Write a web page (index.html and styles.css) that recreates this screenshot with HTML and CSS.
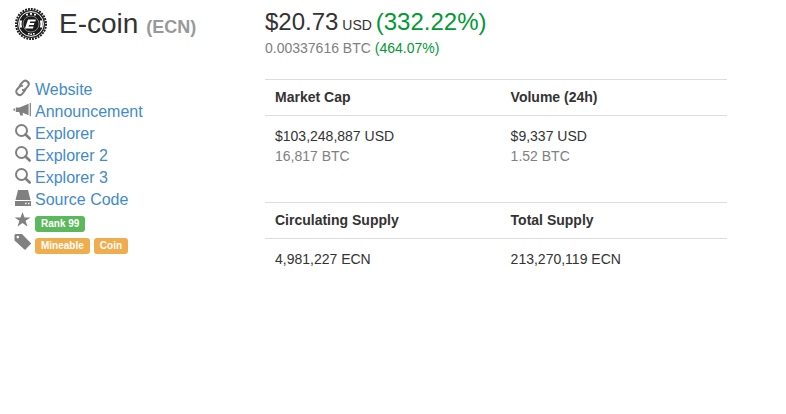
FILE: index.html
```
<!DOCTYPE html>
<html lang="en">
<head>
  <meta charset="utf-8">
  <title>E-coin (ECN) price, market cap and info</title>
  <link rel="stylesheet" href="styles.css">
</head>
<body>
  <div class="container">
    <div class="sidebar">
      <h1 class="coin-name">
        <svg class="coin-logo" viewBox="0 0 32 32" aria-hidden="true">
          <circle cx="16" cy="16" r="14" fill="#1b1b1b"/>
          <circle cx="16" cy="16" r="15" fill="none" stroke="#1b1b1b" stroke-width="2" stroke-dasharray="1.9 1.02"/>
          <circle cx="16" cy="16" r="12.4" fill="none" stroke="#fff" stroke-width="1"/>
          <circle cx="16" cy="16" r="8" fill="none" stroke="#999" stroke-width=".8"/>
          <path d="M4.500 12.500h2.600l-.6 3.500.6 3.500H4.500zM27.500 12.500h-2.600l.6 3.500-.6 3.500h2.600z" fill="#fff"/>
          <path d="M11 5.800h2v1.600h-2zM15 4.800h2v2h-2zM19 5.800h2v1.600h-2zM13 25h1.600v1.400H13zM15.400 25.400H17V27h-1.600zM18 25h1.600v1.400H18z" fill="#fff"/>
          <path d="M13 11.500h8l-.7 2h-5l-.5 1.500h4.600l-.6 2h-4.700l-.5 1.600h5l-.7 2h-8z" fill="#fff"/>
        </svg>
        <span>E-coin <small>(ECN)</small></span>
      </h1>

      <ul class="links">
        <li>
          <svg class="icon" viewBox="0 0 16 16" aria-hidden="true"><g fill="none" stroke="#808080" stroke-width="2"><path d="M4.800 7.200c-.3-1 0-1.900.7-2.700l2.300-2.600C9 .5 11 .4 12.500 1.600s1.700 3.100.5 4.600l-2.300 2.700c-.9 1-2.300 1.300-3.600.8"/><path d="M10.200 8.300c.3 1 0 2-.7 2.800l-2.300 2.700c-1.200 1.400-3.200 1.500-4.700.3s-1.700-3.100-.5-4.600l2.300-2.700c.9-1 2.300-1.300 3.600-.8"/></g></svg>
          <a href="#">Website</a>
        </li>
        <li>
          <svg class="icon" viewBox="0 0 16 16" aria-hidden="true"><path d="M14.700 1h1.200v13.300h-1.200zM13.600 1.800v11.500L7.500 10.800l.7 2.700H5.300L4.200 10H.8V5.600h3.600zM-1.500 6.600H0v2.200h-1.500z"/></svg>
          <a href="#">Announcement</a>
        </li>
        <li>
          <svg class="icon" viewBox="0 0 16 16" aria-hidden="true"><circle cx="6.500" cy="6.500" r="5.500" fill="none" stroke="#808080" stroke-width="2"/><path d="M10.500 10.500l4.200 4" stroke="#808080" stroke-width="2.600" stroke-linecap="round"/></svg>
          <a href="#">Explorer</a>
        </li>
        <li>
          <svg class="icon" viewBox="0 0 16 16" aria-hidden="true"><circle cx="6.500" cy="6.500" r="5.500" fill="none" stroke="#808080" stroke-width="2"/><path d="M10.500 10.500l4.200 4" stroke="#808080" stroke-width="2.600" stroke-linecap="round"/></svg>
          <a href="#">Explorer 2</a>
        </li>
        <li>
          <svg class="icon" viewBox="0 0 16 16" aria-hidden="true"><circle cx="6.500" cy="6.500" r="5.500" fill="none" stroke="#808080" stroke-width="2"/><path d="M10.500 10.500l4.200 4" stroke="#808080" stroke-width="2.600" stroke-linecap="round"/></svg>
          <a href="#">Explorer 3</a>
        </li>
        <li>
          <svg class="icon" viewBox="0 0 16 16" aria-hidden="true"><path d="M3 0h10l2.500 10H.5zM0 11h16v5H0z"/><path d="M10 12.800h1.500v1.500H10zM13 12.800h1.500v1.500H13z" fill="#fff"/></svg>
          <a href="#">Source Code</a>
        </li>
        <li>
          <svg class="icon" viewBox="0 0 16 16" aria-hidden="true"><path d="M7.500 0l2 5.400h6l-4.900 3.400L12.500 14.600l-5-3.600-5 3.600 1.900-5.800L-.5 5.400h6z"/></svg>
          <span class="label label-success">Rank 99</span>
        </li>
        <li>
          <svg class="icon" viewBox="0 0 16 16" aria-hidden="true"><path fill-rule="evenodd" d="M-.5 1L.5 0H7l9.200 9.500L10 16-.5 6.500zM2.800 1.800a1.300 1.300 0 1 0 0 2.600 1.300 1.300 0 0 0 0-2.600z"/></svg>
          <span class="label label-warning">Mineable</span>
          <span class="label label-warning">Coin</span>
        </li>
      </ul>
    </div>

    <div class="main">
      <div class="price">
        <span class="price-usd">$20.73</span> USD
        <span class="price-usd positive">(332.22%)</span>
      </div>
      <div class="price-btc">0.00337616 BTC <span class="positive">(464.07%)</span></div>

      <table class="stats">
        <tr>
          <th>Market Cap</th>
          <th>Volume (24h)</th>
        </tr>
        <tr>
          <td>$103,248,887 USD<br><span class="muted">16,817 BTC</span></td>
          <td>$9,337 USD<br><span class="muted">1.52 BTC</span></td>
        </tr>
      </table>

      <table class="stats">
        <tr>
          <th>Circulating Supply</th>
          <th>Total Supply</th>
        </tr>
        <tr>
          <td>4,981,227 ECN</td>
          <td>213,270,119 ECN</td>
        </tr>
      </table>
    </div>
  </div>
</body>
</html>
```
FILE: styles.css
```
* {
  box-sizing: border-box;
}

body {
  margin: 0;
  font-family: Arial, "Liberation Sans", sans-serif;
  font-size: 14px;
  line-height: 20px;
  color: #333;
  background-color: #fff;
}

.container {
  display: grid;
  grid-template-columns: 250px 1fr;
  padding: 8px 59px 20px 15px;
}

.coin-name {
  display: flex;
  align-items: center;
  gap: 12px;
  margin: 0 0 38px;
  font-size: 28px;
  font-weight: normal;
  line-height: 32px;
}

.coin-name small {
  font-size: 18px;
  font-weight: bold;
  line-height: 20px;
  color: #999;
}

.coin-logo {
  width: 32px;
  height: 32px;
}

.links {
  margin: 0;
  padding: 0;
  list-style: none;
  font-size: 16px;
  line-height: 22px;
}

.links li {
  display: flex;
  align-items: center;
  gap: 4px;
  height: 22px;
}

.links a {
  padding-top: 2px;
  color: #428bca;
  text-decoration: none;
}

.links a:hover {
  text-decoration: underline;
}

.icon {
  width: 16px;
  height: 16px;
  margin-bottom: 2px;
  overflow: visible;
  fill: #808080;
}

.label {
  margin-top: 6px;
  padding: 0 6px;
  border-radius: 3px;
  font-size: 10px;
  font-weight: bold;
  line-height: 16px;
  color: #fff;
}

.label-success {
  background-color: #5cb85c;
}

.label-warning {
  background-color: #f0ad4e;
}

.price {
  line-height: 28px;
}

.price-usd {
  font-size: 24px;
}

.price-btc {
  margin-bottom: 22px;
  line-height: 18px;
  color: #808080;
}

.positive {
  color: #093;
}

.muted {
  color: #808080;
}

.stats {
  width: 100%;
  margin-bottom: 26px;
  border-spacing: 0;
  table-layout: fixed;
}

.stats th,
.stats td {
  padding: 8px 10px;
  border-top: 1px solid #ddd;
  text-align: left;
  vertical-align: top;
}

.stats th {
  line-height: 19px;
}

.stats th:first-child {
  width: 51%;
}

.stats td {
  padding: 10px;
}
```
